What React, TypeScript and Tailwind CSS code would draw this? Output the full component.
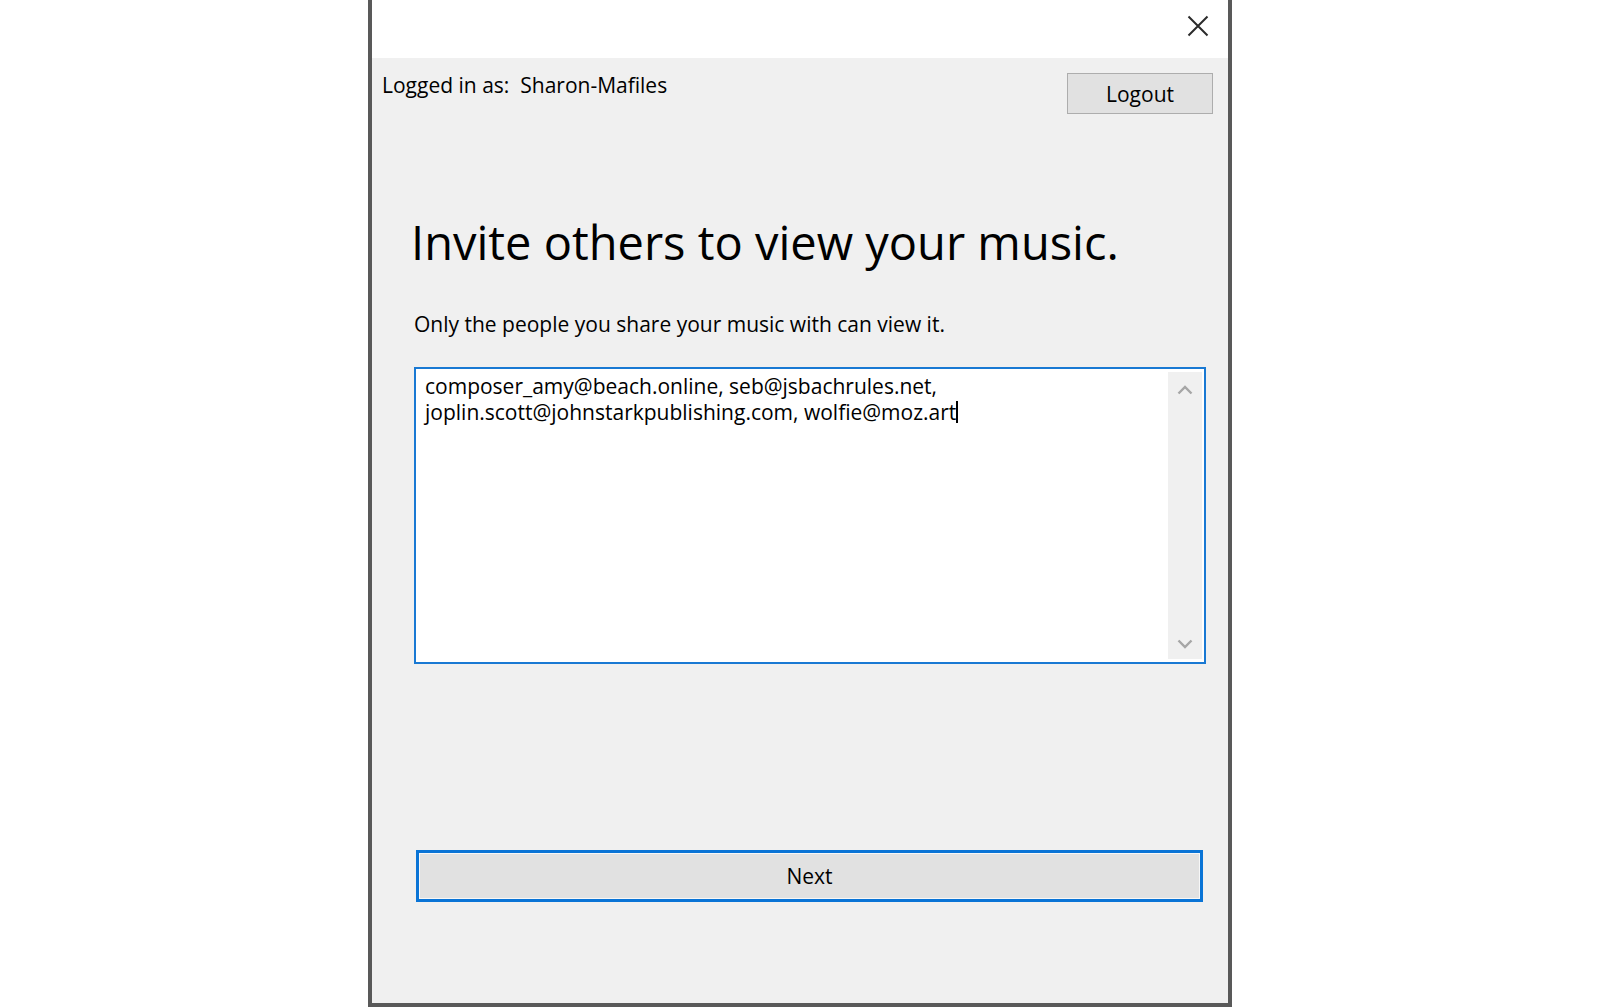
import React from "react";

const FONT = { fontFamily: '"Open Sans", "Noto Sans", Arial, sans-serif' };

function CloseIcon() {
  return (
    <svg width="22" height="22" viewBox="0 0 22 22" fill="none" stroke="#2b2b2b" strokeWidth={2}>
      <path d="M1.5 1.5l19 19M20.5 1.5l-19 19" />
    </svg>
  );
}

function Chevron({ up }: { up?: boolean }) {
  return (
    <svg width="16" height="10" viewBox="0 0 16 10" fill="none" stroke="#a6a6a6" strokeWidth={2.4}>
      {up ? <path d="M1.5 8.5L8 2l6.5 6.5" /> : <path d="M1.5 1.5L8 8l6.5-6.5" />}
    </svg>
  );
}

export default function App() {
  return (
    <div className="w-full h-[1007px] bg-white flex justify-center text-black" style={FONT}>
      <div className="w-[864px] h-[1007px] flex flex-col border-x-4 border-b-4 border-[#595959]">
        {/* title bar */}
        <div className="h-[58px] bg-white flex justify-end items-start pt-[15px] pr-[19px]">
          <CloseIcon />
        </div>

        <div className="flex-1 bg-[#f0f0f0] flex flex-col">
          {/* account row */}
          <div className="flex items-start justify-between pt-[13px] pl-[10px] pr-[15px]">
            <span className="text-[21px] leading-[28px] whitespace-pre">Logged in as:  Sharon-Mafiles</span>
            <button className="mt-[2px] w-[146px] h-[41px] border border-[#adadad] bg-[#e1e1e1] text-[21px] leading-[28px] text-black">
              Logout
            </button>
          </div>

          <div className="flex flex-col pl-[42px] pr-[22px]">
            <h1 className="mt-[100px] text-[47px] leading-[56px] font-normal ml-[-3px]">
              Invite others to view your music.
            </h1>
            <p className="mt-[40px] text-[21px] leading-[28px]">
              Only the people you share your music with can view it.
            </p>

            {/* email box */}
            <div className="mt-[29px] h-[297px] border-2 border-[#1979d3] bg-white flex">
              <div className="flex-1 pt-[4px] pl-[9px] text-[21px] leading-[26px]">
                <div>composer_amy@beach.online, seb@jsbachrules.net,</div>
                <div className="flex items-center">
                  joplin.scott@johnstarkpublishing.com, wolfie@moz.art
                  <span className="inline-block w-[2px] h-[22px] bg-black" />
                </div>
              </div>
              <div className="w-[34px] my-[3px] mr-[2px] bg-[#f0f0f0] flex flex-col items-center justify-between pt-[13px] pb-[10px]">
                <Chevron up />
                <Chevron />
              </div>
            </div>

            <button className="mt-[186px] ml-[2px] mr-[3px] h-[52px] border-[3px] border-[#0a74d6] bg-[#e1e1e1] text-[21px] leading-[28px] text-black shadow-[inset_0_0_0_1px_#f7f7f7]">
              Next
            </button>
          </div>
        </div>
      </div>
    </div>
  );
}
